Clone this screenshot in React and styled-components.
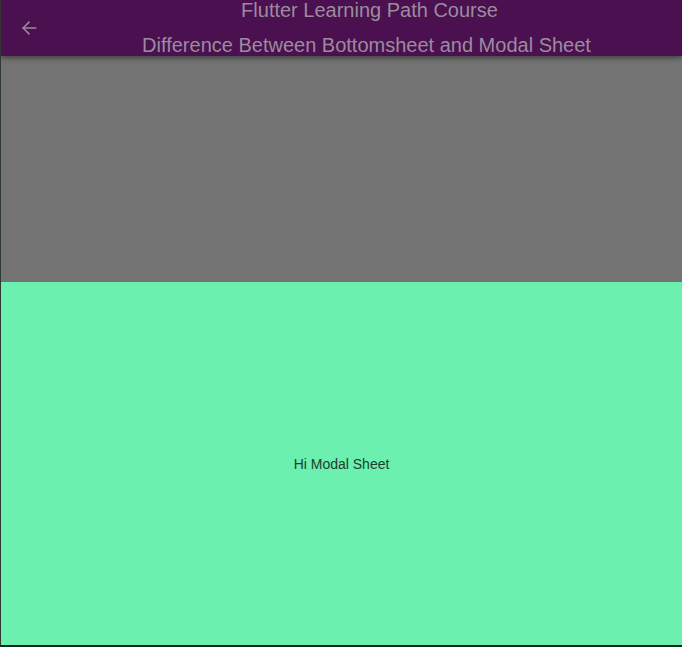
import styled, { createGlobalStyle } from 'styled-components';

const GlobalStyle = createGlobalStyle`
  html, body {
    margin: 0;
    padding: 0;
    background: #0b2a1b;
    font-family: 'Liberation Sans', Arial, sans-serif;
  }
`;

const Screen = styled.div`
  height: 647px;
  width: 682px;
  display: flex;
  flex-direction: column;
  box-sizing: border-box;
  border-left: 1px solid #2e3a33;
  border-bottom: 2px solid #0b2a1b;
  overflow: hidden;
`;

const AppBar = styled.header`
  height: 56px;
  flex-shrink: 0;
  display: flex;
  align-items: center;
  background-color: #4a1050;
  box-shadow: 0 2px 5px rgba(0, 0, 0, 0.45);
  position: relative;
  z-index: 1;
  overflow: hidden;
`;

const Leading = styled.div`
  width: 56px;
  height: 56px;
  display: flex;
  justify-content: center;
  align-items: center;
  flex-shrink: 0;
  color: #9a8a9d;
`;

const TitleBlock = styled.div`
  flex: 1;
  display: flex;
  flex-direction: column;
  align-items: center;
`;

const TitleLine = styled.span`
  line-height: 35px;
  font-size: 20px;
  color: #9c8b9f;
  white-space: nowrap;
  padding-right: ${(p) => (p.$nudge ? '6px' : '0')};
`;

const Scrim = styled.div`
  height: 226px;
  flex-shrink: 0;
  background-color: #737373;
`;

const Sheet = styled.div`
  flex: 1;
  display: flex;
  justify-content: center;
  align-items: center;
  background-color: #6bf0b0;
`;

const SheetText = styled.p`
  margin: 0;
  font-size: 14px;
  color: #1f3e2e;
`;

const BackArrow = () => (
  <svg width="20" height="20" viewBox="0 0 24 24" fill="none" stroke="currentColor" strokeWidth="1.8" strokeLinecap="square">
    <path d="M20 12H5" />
    <path d="M12 5l-7 7 7 7" />
  </svg>
);

const App = () => {
  return (
    <>
      <GlobalStyle />
      <Screen>
        <AppBar>
          <Leading>
            <BackArrow />
          </Leading>
          <TitleBlock>
            <TitleLine>Flutter Learning Path Course</TitleLine>
            <TitleLine $nudge>Difference Between Bottomsheet and Modal Sheet</TitleLine>
          </TitleBlock>
        </AppBar>
        <Scrim />
        <Sheet>
          <SheetText>Hi Modal Sheet</SheetText>
        </Sheet>
      </Screen>
    </>
  );
};

export default App;
